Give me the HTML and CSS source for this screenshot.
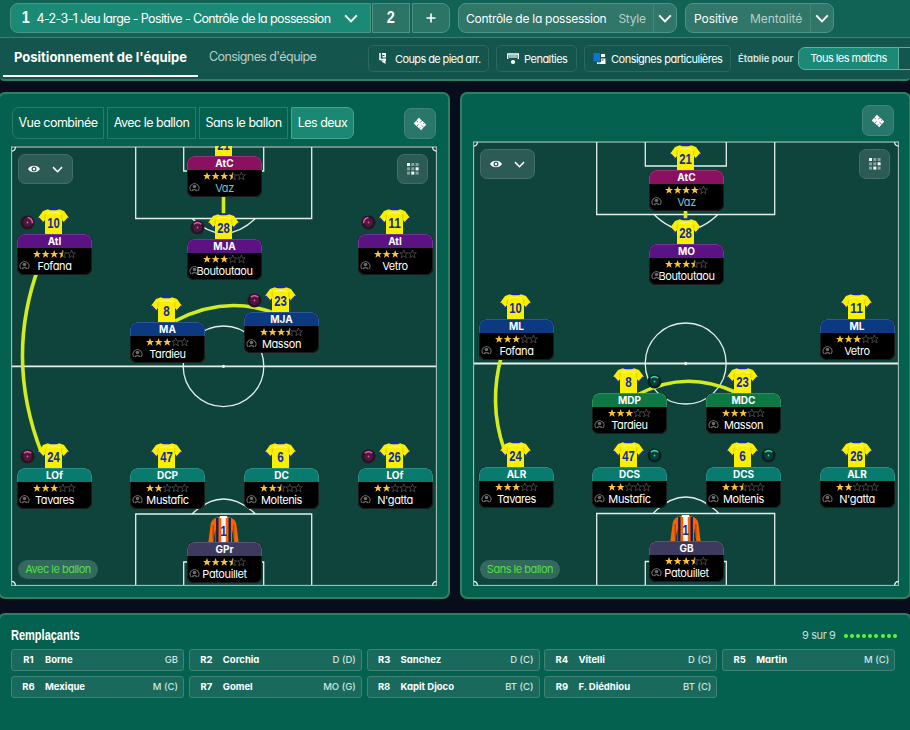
FILE: index.html
```html
<!DOCTYPE html>
<html lang="fr">
<head>
<meta charset="UTF-8" />
<meta name="viewport" content="width=device-width, initial-scale=1.0"/>
<title>Tactique</title>
<link rel="stylesheet" href="styles.css">
</head>
<body>
<!-- icônes communes -->
<svg class="defs" width="0" height="0">
    <symbol id="chevron" viewBox="0 0 14 9"><path d="M1.2 1.4 L7 7.4 L12.8 1.4" fill="none" stroke="#fff" stroke-width="2"/></symbol>
    <symbol id="eye" viewBox="0 0 14 8"><path fill-rule="evenodd" d="M1 4 C3.5 -.3 10.500 -.3 13 4 C10.500 8.300 3.500 8.300 1 4Z M7 1.500 A2.500 2.500 0 1 0 7 6.500 A2.500 2.500 0 1 0 7 1.500Z" fill="#fff"/><circle cx="7" cy="4" r="1.200" fill="#fff"/></symbol>
    <symbol id="grid" viewBox="0 0 12 12">
        <g fill="#87a19c"><rect x="4.300" width="3" height="3"/><rect x="8.600" width="3" height="3"/><rect y="4.300" width="3" height="3"/><rect x="4.300" y="4.300" width="3" height="3"/><rect y="8.600" width="3" height="3"/><rect x="8.600" y="8.600" width="3" height="3"/></g>
        <g fill="#fff"><rect width="3" height="3"/><rect x="8.600" y="4.300" width="3" height="3"/><rect x="4.300" y="8.600" width="3" height="3"/></g>
    </symbol>
    <symbol id="ticket" viewBox="0 0 14 14">
        <g transform="rotate(42 7 7)"><rect x="2" y="3.200" width="10" height="7.600" fill="#fff"/><path d="M6.200 3v2.600M6.200 8.300v2.800M2 7h2.300M9 7h3M9.400 3v1.700M9.400 9.400v1.600" stroke="#2c786b" stroke-width=".8"/></g>
    </symbol>
    <symbol id="head" viewBox="0 0 11 11">
        <path d="M2 8.800A4.400 4.400 0 1 1 9 8.800" fill="none" stroke="#666" stroke-width="1.100"/><circle cx="5.500" cy="4.500" r="1.800" fill="#6c6c6c"/><path d="M2.300 9C2.700 6.300 8.300 6.300 8.700 9L7.500 9.300 5.500 8 3.500 9.300Z" fill="#6c6c6c"/>
    </symbol>
    <symbol id="shirt" viewBox="0 0 31 27">
        <path d="M.3 9.500L5 3l5-1.700h11L26 3l4.700 6.500-4.500 5L24 12v14.500H7V12l-2.200 2.500Z" fill="#f8f000"/>
        <path d="M11 .3h9l.6 1.400q-5 1.200-10.200 0Z" fill="#1428b4"/>
        <path d="M.7 10l3.900 4.300M30.300 10l-3.900 4.300" stroke="#1a2ac0" stroke-width="1.500"/>
        <path d="M9 5.500q6.500-2 13 0" stroke="#fff88a" stroke-width="1.200" fill="none"/>
        <path d="M7.200 11V6.500M23.800 11V6.500" stroke="#c9bd00" stroke-width=".7"/>
    </symbol>
    <symbol id="shirt-gk" viewBox="0 0 31 27">
        <path d="M10 1.200h11q5.500.8 7.200 6L30.700 26.500h-4.200L24 13v13.500H7.500V13L5 26.500H.3L2.800 7.200Q4.500 2 10 1.200Z" fill="#fa6400"/>
        <path d="M13.200 1h4.600v25.500h-4.600z" fill="#f4f4f4"/>
        <path d="M9.300 2v24.500M21.700 2v24.500" stroke="#141a5c" stroke-width="2.400"/>
        <path d="M12 0h7l.7 1.800q-4 1.500-8.400 0Z" fill="#fff"/>
        <path d="M5.200 9v14M25.800 9v14" stroke="#8a3a18" stroke-width="1"/>
    </symbol>
</svg>

<header class="topbar">
    <div class="row row-tactics">
        <div class="tactic-select"><b class="num">1</b><span class="tactic-name">4-2-3-1 Jeu large - Positive - Contrôle de la possession</span><svg class="chev" width="14" height="9"><use href="#chevron"/></svg></div>
        <div class="slot"><b class="num">2</b></div>
        <div class="slot slot-add"><svg width="10" height="10"><path d="M5 .5v9M.5 5h9" stroke="#fff" stroke-width="1.600"/></svg></div>
        <div class="drop drop-style"><span class="value">Contrôle de la possession</span><span class="label">Style</span><i class="arrow"><svg width="14" height="9"><use href="#chevron"/></svg></i></div>
        <div class="drop drop-mental"><span class="value">Positive</span><span class="label">Mentalité</span><i class="arrow"><svg width="14" height="9"><use href="#chevron"/></svg></i></div>
    </div>
    <div class="row row-nav">
        <div class="nav-tab active"><span>Positionnement de l'équipe</span></div>
        <div class="nav-tab"><span>Consignes d'équipe</span></div>
        <div class="tool tool-kick">
            <svg width="8" height="13"><path d="M1 1v6.500h2.500" stroke="#fff" stroke-width="1.500" fill="none"/><path d="M3 1h4v4.500H3.500zM2 8.500h5V6.500H4M2.500 9.500L6.500 12V8" fill="#fff"/><path d="M3.500 3.500h2" stroke="#14544d"/></svg>
            <span>Coups de pied arr.</span>
        </div>
        <div class="tool tool-pen">
            <svg width="12" height="12"><path d="M.7 6V1h10.600v5" stroke="#fff" stroke-width="1.400" fill="none"/><path d="M2 2h8v3H2z" fill="#9fbdb7"/><circle cx="6" cy="9" r="2.100" fill="#fff"/></svg>
            <span>Penalties</span>
        </div>
        <div class="tool tool-cons">
            <svg width="13" height="13"><rect x=".5" y="1" width="6.500" height="8.500" fill="#0d74cf"/><path d="M8 2h4v3H8zM8 6.500h4.500V12H4v-1.800h4z" fill="#fff"/><path d="M8.500 8h2M5.500 11h1" stroke="#14544d"/></svg>
            <span>Consignes particulières</span>
        </div>
        <span class="set-for">Établie pour</span>
        <div class="match-btn"><span>Tous les matchs</span></div>
        <div class="match-rest"></div>
    </div>
</header>

<main>
    <section class="panel panel-left">
        <div class="panel-head">
            <div class="views">
                <div class="view v1"><span>Vue combinée</span></div>
                <div class="view v2"><span>Avec le ballon</span></div>
                <div class="view v3"><span>Sans le ballon</span></div>
                <div class="view v4 active"><span>Les deux</span></div>
            </div>
            <div class="icon-btn"><svg width="14" height="14"><use href="#ticket"/></svg></div>
        </div>
        <div class="pitch" id="pitchWith">
            <svg class="lines" width="426" height="440" fill="none" stroke="#e4efec" stroke-width="1.300">
                <rect x=".5" y="1" width="425" height="438.500" stroke="#9dbab3"/>
                <path d="M124.700 1v71.500h176V1M172.700 1v24h80V1M181 72.500q31.500 30 63.500 0"/>
                <path d="M1 220.300h424" stroke-width="1.800"/>
                <circle cx="212.500" cy="220.300" r="40.300"/><circle cx="212.500" cy="220.300" r="1" fill="#fff"/>
                <path d="M124.700 439v-71h176v71M172.700 439v-23h80v23M181 368q31.500-30 63.500 0"/>
                <path d="M1 5q3 0 3.500-4M421.500 1q.5 4 4 4M1 435.500q3 0 3.500 4M421.500 439.500q.5-4 4-4"/>
                <g class="links"><path d="M212.500 40v45"/><path d="M28 120Q-6.500 213 31 308"/><path d="M164 175Q215 148 266 168"/></g>
            </svg>
            <div class="pitch-tools"><div class="eye-btn"><svg width="14" height="8"><use href="#eye"/></svg><svg width="11" height="7"><use href="#chevron"/></svg></div><div class="grid-btn"><svg width="12" height="12"><use href="#grid"/></svg></div></div>
            <span class="phase">Avec le ballon</span>
        </div>
    </section>

    <section class="panel panel-right">
        <div class="panel-head">
            <div class="icon-btn"><svg width="14" height="14"><use href="#ticket"/></svg></div>
        </div>
        <div class="pitch" id="pitchWithout">
            <svg class="lines" width="426" height="445" fill="none" stroke="#e4efec" stroke-width="1.300">
                <rect x=".5" y="1" width="425" height="443.500" stroke="#9dbab3"/>
                <path d="M123.700 1v72.500h178V1M172.300 1v24h81V1M180.500 73q32 32 65 0"/>
                <path d="M1 222.500h424" stroke-width="1.800"/>
                <circle cx="212.700" cy="222.500" r="40.500"/><circle cx="212.700" cy="222.500" r="1" fill="#fff"/>
                <path d="M123.700 444v-71.500h178V444M172.300 444v-23.500h81V444M180.500 372q32-32 65 0"/>
                <path d="M1 5q3 0 3.500-4M421.500 1q.5 4 4 4M1 440.500q3 0 3.500 4M421.500 444.500q.5-4 4-4"/>
                <g class="links"><path d="M212.500 60v20"/><path d="M29 213Q15 262 31 308"/><path d="M164 254Q212 228 262 251"/></g>
            </svg>
            <div class="pitch-tools"><div class="eye-btn"><svg width="14" height="8"><use href="#eye"/></svg><svg width="11" height="7"><use href="#chevron"/></svg></div><div class="grid-btn"><svg width="12" height="12"><use href="#grid"/></svg></div></div>
            <span class="phase">Sans le ballon</span>
        </div>
    </section>
</main>

<section class="bench">
    <div class="bench-head">
        <h2>Remplaçants</h2>
        <div class="count"><span>9 sur 9</span><div class="dots"><i></i><i></i><i></i><i></i><i></i><i></i><i></i><i></i><i></i></div></div>
    </div>
    <div class="subs" id="subs"></div>
</section>

<script src="script.js"></script>
</body>
</html>
```
FILE: styles.css
```css
* {
    box-sizing: border-box;
}
body {
    margin: 0;
    width: 910px;
    height: 730px;
    overflow: hidden;
    background: #080d1b;
    color: #fff;
    font-family: Inter, "Liberation Sans", sans-serif;
    font-feature-settings: "cv11";
    font-size: 12px;
}
svg {
    display: block;
    flex: none;
}
span, b {
    white-space: nowrap;
}
.defs {
    position: absolute;
}

/* barre du haut */
.topbar {
    height: 81px;
    background: #14554d;
    border-bottom: 2px solid #2f806a;
    border-radius: 0 0 4px 4px;
}
.row {
    display: flex;
}
.row-tactics {
    height: 38px;
    padding: 3px 0 0 10px;
    background: #116355;
    border-bottom: 1px solid #368472;
}
.row-tactics > div {
    height: 30px;
    display: flex;
    align-items: center;
    border: 1px solid #4c9585;
}
.num {
    font-family: "Liberation Sans", sans-serif;
    font-size: 17px;
    line-height: 17px;
    margin-top: -2px;
    transform: scaleX(.85);
}
.tactic-select {
    width: 361px;
    padding: 0 12px 0 10px;
    background: #1a8a76;
    border-radius: 8px 0 0 8px;
}
.tactic-name {
    margin-left: 6px;
    font-size: 12.500px;
    letter-spacing: -.63px;
}
.chev {
    margin-left: auto;
}
.slot {
    width: 38px;
    margin-left: 1px;
    justify-content: center;
    background: #2b7567;
}
.slot-add {
    margin-left: 2px;
    border-radius: 0 8px 8px 0;
}
.drop {
    background: #307669;
    border-radius: 8px;
    padding-left: 7px;
    font-size: 12px;
    letter-spacing: -.27px;
}
.drop-style {
    width: 219px;
    margin-left: 8px;
}
.drop-mental {
    width: 149px;
    margin-left: 8px;
    padding-left: 8px;
    letter-spacing: -.05px;
}
.drop .label {
    margin-left: 12px;
    color: #b7d0ca;
}
.arrow {
    margin-left: auto;
    width: 23px;
    height: 28px;
    display: flex;
    align-items: center;
    justify-content: center;
    border-left: 1px solid #458777;
}
.row-nav {
    height: 41px;
    padding-left: 3px;
    align-items: flex-start;
}
.nav-tab {
    height: 39px;
    padding: 10px 11px 0;
    font-size: 12.500px;
    letter-spacing: -.58px;
    line-height: 18px;
    color: #b9cfcb;
}
.nav-tab.active {
    width: 195px;
    font-size: 13px;
    letter-spacing: 0;
    font-weight: 700;
    color: #fff;
    border-bottom: 2px solid #fff;
}
.tool {
    height: 27px;
    margin-top: 7px;
    display: flex;
    align-items: center;
    border: 1px solid #2b6960;
    border-radius: 5px;
    font-size: 11px;
    letter-spacing: -.5px;
    padding-left: 10px;
}
.tool-kick {
    width: 121px;
    margin-left: auto;
    letter-spacing: -.6px;
}
.tool-kick span {
    margin-left: 8px;
}
.tool-pen {
    width: 81px;
    margin-left: 7px;
}
.tool-pen span {
    margin-left: 5px;
}
.tool-cons {
    width: 147px;
    margin-left: 7px;
    padding-left: 8px;
}
.tool-cons span {
    margin-left: 5px;
}
.set-for {
    width: 60px;
    margin-left: 7px;
    line-height: 41px;
    font-size: 9.500px;
    font-weight: 600;
    color: #d7e6e2;
}
.match-btn {
    width: 101px;
    height: 23px;
    margin-top: 9px;
    text-align: center;
    line-height: 21px;
    font-size: 11px;
    letter-spacing: -.53px;
    background: #1a8a76;
    border: 1px solid #61b09f;
    border-radius: 7px 0 0 7px;
}
.match-rest {
    width: 11px;
    height: 23px;
    margin-top: 9px;
    border: 1px solid #61b09f;
    border-width: 1px 0;
}

/* les deux terrains */
main {
    display: flex;
    gap: 10px;
    margin: 11px -2px 0;
}
.panel {
    height: 507px;
    background: #04614f;
    border: 2px solid #327e62;
    border-radius: 7px;
}
.panel-left {
    width: 452px;
    padding-left: 11px;
}
.panel-right {
    width: 451px;
    padding-left: 11px;
}
.panel-head {
    display: flex;
    justify-content: space-between;
}
.panel-left .panel-head {
    width: 425px;
    height: 52px;
    padding-top: 13px;
}
.panel-right .panel-head {
    width: 421px;
    height: 47px;
    padding-top: 11px;
    justify-content: flex-end;
}
.views {
    display: flex;
    gap: 3px;
    padding-left: 1px;
}
.view {
    height: 32px;
    line-height: 30px;
    text-align: center;
    font-size: 12.500px;
    letter-spacing: -.5px;
    border: 1px solid #2d7a66;
}
.v1 { width: 92px; border-radius: 7px 0 0 7px; }
.v2 { width: 89px; }
.v3 { width: 89px; }
.v4 { width: 63px; border-radius: 0 7px 7px 0; }
.view.active {
    background: #1b8873;
    border-color: #4aa38f;
}
.icon-btn {
    width: 32px;
    height: 31px;
    display: flex;
    align-items: center;
    justify-content: center;
    background: #29766a;
    border: 1px solid #438578;
    border-radius: 7px;
}
.panel-left .icon-btn {
    margin-top: 1px;
}
.pitch {
    position: relative;
    width: 426px;
    height: 440px;
    overflow: hidden;
    background: #0e443c;
}
.panel-right .pitch {
    height: 445px;
}
.lines {
    position: absolute;
    left: 0;
    top: 0;
}
.links path {
    stroke: #d3ec22;
    stroke-width: 3.600;
}
.pitch-tools {
    display: flex;
    justify-content: space-between;
    padding: 8px 9px 0 7px;
}
.eye-btn, .grid-btn {
    position: relative;
    height: 30px;
    display: flex;
    align-items: center;
    background: #2b5b54;
    border: 1px solid #416e67;
    border-radius: 7px;
}
.eye-btn {
    width: 55px;
    gap: 11px;
    padding-left: 8px;
}
.grid-btn {
    width: 31px;
    justify-content: center;
}
.phase {
    position: absolute;
    left: 7px;
    bottom: 7px;
    width: 80px;
    height: 19px;
    border-radius: 10px;
    background: #33695f;
    color: #4fe03c;
    font-size: 11px;
    letter-spacing: -.5px;
    line-height: 18px;
    text-align: center;
}

/* joueurs, posés librement sur le terrain */
.player {
    position: absolute;
    width: 75px;
    height: 67px;
}
.shirt {
    display: block;
    margin-left: 21px;
}
.shirt text {
    text-anchor: middle;
    font-family: "Liberation Sans", sans-serif;
    font-weight: 700;
    font-size: 15.500px;
    fill: #1228a8;
}
.card {
    position: relative;
    height: 41px;
    background: #000;
    border-radius: 7px;
    box-shadow: inset 0 0 0 1px #1b1c1c;
    overflow: hidden;
}
.role {
    height: 14px;
    text-align: center;
    font-size: 10px;
    line-height: 12px;
    font-weight: 700;
    border: 1px solid rgba(255, 255, 255, .15);
    border-bottom: 0;
    border-radius: 7px 7px 0 0;
}
.atc { background: #8a1160; }
.am { background: #5b1283; }
.mid { background: #0b3a80; }
.dm { background: #0d7844; }
.def { background: #087a6e; }
.gk { background: #3d3a5e; }
.stars {
    margin: 2px auto 0;
}
.name {
    height: 13px;
    text-align: center;
    font-size: 11px;
    letter-spacing: -.4px;
    line-height: 13px;
    margin-top: 2px;
}
.name.blue {
    color: #6fc4d6;
}
.head {
    position: absolute;
    left: 2px;
    top: 26px;
}
.dial {
    position: absolute;
    top: 7px;
}
.dial.l { left: 3px; }
.dial.r { left: 55px; }

/* remplaçants */
.bench {
    height: 118px;
    margin: 14px -2px 0;
    padding: 12px 0 0 12px;
    background: #04614f;
    border: 2px solid #2f7d68;
    border-bottom: 0;
    border-radius: 7px 7px 0 0;
}
.bench-head {
    display: flex;
    justify-content: space-between;
    height: 22px;
    padding-right: 13px;
}
h2 {
    margin: 0 0 0 -1px;
    font-family: "Liberation Sans", sans-serif;
    font-size: 15.500px;
    line-height: 16px;
    transform: scaleX(.71);
    transform-origin: left;
}
.count {
    display: flex;
    font-size: 11px;
    letter-spacing: -.4px;
    line-height: 17px;
    color: #c8dfd9;
}
.dots {
    display: flex;
    gap: 2.200px;
    padding: 7px 0 0 8px;
}
.dots i {
    width: 4px;
    height: 4px;
    border-radius: 50%;
    background: #5df536;
}
.subs {
    display: grid;
    grid-template-columns: repeat(5, 173px);
    grid-auto-rows: 22px;
    gap: 5px 4.800px;
    margin-left: -1px;
}
.sub {
    display: flex;
    align-items: center;
    padding: 0 5px 1px 0;
    background: #196a5c;
    border: 1px solid #3e8375;
    border-radius: 3px;
    font-size: 9.500px;
    font-weight: 700;
}
.sub .code {
    width: 33px;
    text-align: center;
}
.sub .pos {
    margin-left: auto;
    font-weight: 500;
    color: #d2e4e0;
}
```
FILE: script.js
```js
// x, y : coin haut gauche de la carte dans le terrain
// dial : [côté, rotation de l'arc, couleur]
const withBall = [
  { x: 176, y: 9.500, num: 21, role: "AtC", cls: "atc", stars: 3.5, name: "Vaz", blue: true },
  { x: 6, y: 88, num: 10, role: "AtI", cls: "am", stars: 3.5, name: "Fofana", dial: ["l", 50, "pink"] },
  { x: 176, y: 92.500, num: 28, role: "MJA", cls: "am", stars: 3, name: "Boutoutaou", dial: ["l", 0, "pink"] },
  { x: 346.500, y: 88, num: 11, role: "AtI", cls: "am", stars: 3, name: "Vetro", dial: ["l", -50, "pink"] },
  { x: 119, y: 176, num: 8, role: "MA", cls: "mid", stars: 3, name: "Tardieu" },
  { x: 233, y: 166, num: 23, role: "MJA", cls: "mid", stars: 3.5, name: "Masson", dial: ["l", 0, "pink"] },
  { x: 6, y: 322, num: 24, role: "LOf", cls: "def", stars: 3, name: "Tavares", dial: ["l", 0, "pink"] },
  { x: 119, y: 322, num: 47, role: "DCP", cls: "def", stars: 2, name: "Mustafic" },
  { x: 233, y: 322, num: 6, role: "DC", cls: "def", stars: 2.5, name: "Moltenis" },
  { x: 346.500, y: 322, num: 26, role: "LOf", cls: "def", stars: 2, name: "N'gatta", dial: ["l", 0, "pink"] },
  { x: 176, y: 396, num: 1, role: "GPr", cls: "gk", stars: 3.5, name: "Patouillet" }
];

const withoutBall = [
  { x: 176, y: 29, num: 21, role: "AtC", cls: "atc", stars: 4, name: "Vaz", blue: true },
  { x: 176, y: 103, num: 28, role: "MO", cls: "am", stars: 3.5, name: "Boutoutaou" },
  { x: 6, y: 178, num: 10, role: "ML", cls: "mid", stars: 3, name: "Fofana" },
  { x: 346.500, y: 178, num: 11, role: "ML", cls: "mid", stars: 3, name: "Vetro" },
  { x: 119, y: 251.500, num: 8, role: "MDP", cls: "dm", stars: 3, name: "Tardieu", dial: ["r", 0, "green"] },
  { x: 233, y: 251.500, num: 23, role: "MDC", cls: "dm", stars: 3, name: "Masson" },
  { x: 6, y: 326, num: 24, role: "ALR", cls: "def", stars: 3, name: "Tavares" },
  { x: 119, y: 326, num: 47, role: "DCS", cls: "def", stars: 2, name: "Mustafic", dial: ["r", 0, "green"] },
  { x: 233, y: 326, num: 6, role: "DCS", cls: "def", stars: 2.5, name: "Moltenis", dial: ["r", 0, "green"] },
  { x: 346.500, y: 326, num: 26, role: "ALR", cls: "def", stars: 2, name: "N'gatta" },
  { x: 176, y: 400, num: 1, role: "GB", cls: "gk", stars: 3.5, name: "Patouillet" }
];

const subs = [
  ["R1", "Borne", "GB"], ["R2", "Corchia", "D (D)"], ["R3", "Sanchez", "D (C)"],
  ["R4", "Vitelli", "D (C)"], ["R5", "Martin", "M (C)"], ["R6", "Mexique", "M (C)"],
  ["R7", "Gomel", "MO (G)"], ["R8", "Kapit Djoco", "BT (C)"], ["R9", "F. Diédhiou", "BT (C)"]
];

const STAR = "M4 0L5.100 2.900H8L5.700 4.700L6.600 7.800L4 6L1.400 7.800L2.300 4.700L0 2.900H2.900Z";
const HALF = "M4 0V6L1.400 7.800L2.300 4.700L0 2.900H2.900Z";

function starsSvg(n) {
    let out = "";
    for (let i = 0; i < 5; i++) {
        out += `<g transform="translate(${i * 8.600} 0)">`;
        if (i < Math.floor(n)) {
            out += `<path d="${STAR}" fill="#f9c23c"/>`;
        } else {
            out += `<path d="${STAR}" fill="none" stroke="#696969" stroke-width=".6"/>`;
            if (n - i === 0.5) out += `<path d="${HALF}" fill="#f9c23c"/>`;
        }
        out += "</g>";
    }
    return `<svg class="stars" width="43" height="8">${out}</svg>`;
}

function dialSvg(dial) {
    const pink = dial[2] === "pink";
    const arc = pink ? "#ee4fb4" : "#23dcae";
    return `<svg class="dial ${dial[0]}" width="15" height="15">
        <circle cx="7.500" cy="7.500" r="7" fill="${pink ? "#28131f" : "#07211f"}"/>
        <circle cx="7.500" cy="7.500" r="4.500" fill="${pink ? "#461b3c" : "#0b3d37"}"/>
        <path d="M3.700 4.200Q7.500 1 11.300 4.200" fill="none" stroke="${arc}" stroke-width="1.500" transform="rotate(${dial[1]} 7.500 7.500)"/>
        <circle cx="7.500" cy="7.500" r=".9" fill="${arc}"/></svg>`;
}

function addPlayers(id, list) {
    const pitch = document.getElementById(id);
    list.forEach(p => {
        const el = document.createElement("div");
        el.className = "player";
        el.style.left = p.x + "px";
        el.style.top = (p.y - 26) + "px";
        const len = String(p.num).length === 2 ? 12.5 : 6.5;
        el.innerHTML = `
            <svg class="shirt" width="31" height="26"><use href="#${p.cls === "gk" ? "shirt-gk" : "shirt"}" width="31" height="27"/><text x="15.500" y="19.500" textLength="${len}" lengthAdjust="spacingAndGlyphs">${p.num}</text></svg>
            <div class="card"><div class="role ${p.cls}"><span>${p.role}</span></div>${starsSvg(p.stars)}
            <svg class="head" width="11" height="11"><use href="#head"/></svg><div class="name${p.blue ? " blue" : ""}">${p.name}</div></div>
            ${p.dial ? dialSvg(p.dial) : ""}`;
        pitch.appendChild(el);
    });
}

addPlayers("pitchWith", withBall);
addPlayers("pitchWithout", withoutBall);

document.getElementById("subs").innerHTML = subs.map(s =>
    `<div class="sub"><span class="code">${s[0]}</span><span>${s[1]}</span><span class="pos">${s[2]}</span></div>`
).join("");
```
